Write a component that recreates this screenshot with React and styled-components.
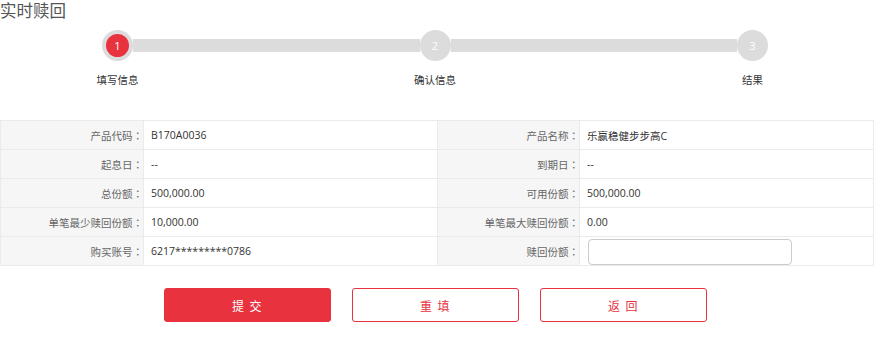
import React from "react";
import styled, { createGlobalStyle } from "styled-components";

const GlobalStyle = createGlobalStyle`
  body {
    margin: 0;
    background: #fff;
    font-family: "Open Sans", "Noto Sans CJK SC", sans-serif;
  }
`;

const Page = styled.div`
  width: 876px;
`;

const Title = styled.h1`
  margin: 0;
  padding-top: 1px;
  font-size: 16.5px;
  line-height: 20px;
  font-weight: normal;
  color: #555;
`;

const Steps = styled.div`
  display: flex;
  margin: 9px 0 0 102px;
  width: 666px;
`;

const Step = styled.div`
  display: flex;
  flex-direction: column;
  align-items: center;
  width: 31px;
  flex: none;
`;

const Dot = styled.div`
  box-sizing: border-box;
  width: 31px;
  height: 31px;
  border-radius: 50%;
  border: 4px solid #dcdcdc;
  background: ${(p) => (p.$active ? "#e8333f" : "#dcdcdc")};
  color: #fff;
  font-size: 11px;
  display: flex;
  align-items: center;
  justify-content: center;
`;

const StepLabel = styled.div`
  margin-top: 13px;
  font-size: 10.5px;
  line-height: 12px;
  color: #333;
  white-space: nowrap;
`;

const Track = styled.div`
  flex: 1;
  height: 13px;
  margin-top: 9px;
  background: #dcdcdc;
`;

const Sheet = styled.div`
  display: grid;
  grid-template-columns: 142px 293px 141px 293px;
  grid-auto-rows: 28px;
  gap: 1px;
  width: max-content;
  margin-top: 34px;
  border: 1px solid #ebebeb;
  background: #ebebeb;
`;

const Label = styled.div`
  background: #f6f6f6;
  color: #666;
  font-size: 10.5px;
  display: flex;
  align-items: center;
  justify-content: flex-end;
`;

const Colon = styled.span`
  font-family: "Noto Sans CJK TC", sans-serif;
`;

const Value = styled.div`
  background: #fff;
  color: #333;
  font-size: 10.5px;
  display: flex;
  align-items: center;
  padding-left: 7px;
`;

const AmountInput = styled.input`
  box-sizing: border-box;
  width: 204px;
  height: 26px;
  margin: 2px 0 0 1px;
  border: 1px solid #ccc;
  border-radius: 4px;
  outline: none;
  font-size: 10.5px;
  padding: 0 6px;
`;

const Actions = styled.div`
  display: flex;
  justify-content: center;
  gap: 21px;
  width: 871px;
  margin-top: 22px;
`;

const Button = styled.button`
  box-sizing: border-box;
  width: 167px;
  height: 34px;
  padding: 0;
  border-radius: 3px;
  border: 1px solid #e8333f;
  background: ${(p) => (p.$primary ? "#e8333f" : "#fff")};
  color: ${(p) => (p.$primary ? "#fff" : "#e8333f")};
  font-family: "Noto Sans CJK SC", sans-serif;
  font-size: 12px;
  letter-spacing: 1.5px;
  cursor: pointer;
`;

const rows = [
  ["产品代码", "B170A0036", "产品名称", "乐嬴稳健步步高C"],
  ["起息日", "--", "到期日", "--"],
  ["总份额", "500,000.00", "可用份额", "500,000.00"],
  ["单笔最少赎回份额", "10,000.00", "单笔最大赎回份额", "0.00"],
];

function FieldLabel({ children }) {
  return (
    <Label>
      {children}
      <Colon>：</Colon>
    </Label>
  );
}

export default function App() {
  return (
    <Page>
      <GlobalStyle />
      <Title>实时赎回</Title>

      <Steps>
        <Step>
          <Dot $active>1</Dot>
          <StepLabel>填写信息</StepLabel>
        </Step>
        <Track />
        <Step>
          <Dot>2</Dot>
          <StepLabel>确认信息</StepLabel>
        </Step>
        <Track />
        <Step>
          <Dot>3</Dot>
          <StepLabel>结果</StepLabel>
        </Step>
      </Steps>

      <Sheet>
        {rows.map((r) => (
          <React.Fragment key={r[0]}>
            <FieldLabel>{r[0]}</FieldLabel>
            <Value>{r[1]}</Value>
            <FieldLabel>{r[2]}</FieldLabel>
            <Value>{r[3]}</Value>
          </React.Fragment>
        ))}
        <FieldLabel>购买账号</FieldLabel>
        <Value>6217*********0786</Value>
        <FieldLabel>赎回份额</FieldLabel>
        <Value>
          <AmountInput type="text" />
        </Value>
      </Sheet>

      <Actions>
        <Button $primary>提 交</Button>
        <Button>重 填</Button>
        <Button>返 回</Button>
      </Actions>
    </Page>
  );
}
